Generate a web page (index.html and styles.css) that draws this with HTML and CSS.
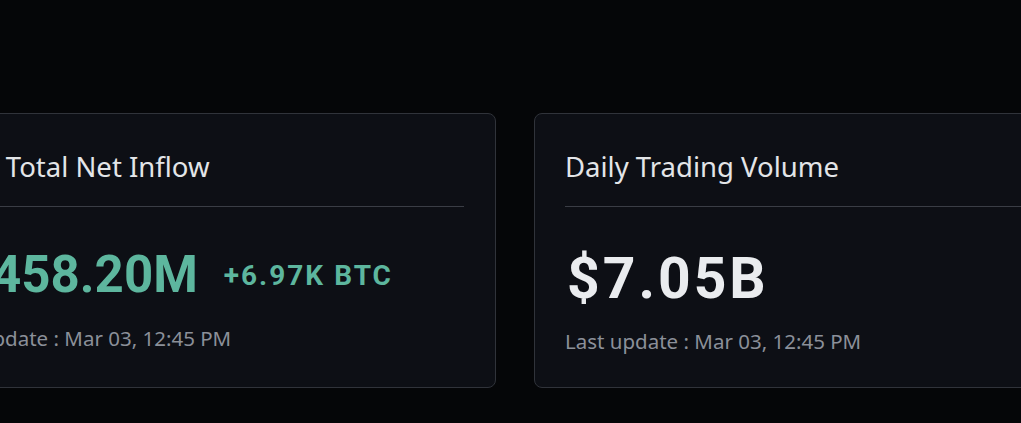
FILE: index.html
```html
<!DOCTYPE html>
<html lang="en">
<head>
<meta charset="utf-8">
<title>ETF Stats</title>
<link rel="stylesheet" href="styles.css">
</head>
<body>
<main class="stats">
  <section class="card">
    <h2 class="card-title">Daily Total Net Inflow</h2>
    <div class="card-divider"></div>
    <div class="value-row">
      <span class="value value-pos">+$458.20M</span>
      <span class="sub-value value-pos">+6.97K BTC</span>
    </div>
    <p class="updated">Last update : Mar 03, 12:45 PM</p>
  </section>
  <section class="card">
    <h2 class="card-title">Daily Trading Volume</h2>
    <div class="card-divider"></div>
    <div class="value-row value-row-lg">
      <span class="value value-lg">$7.05B</span>
    </div>
    <p class="updated">Last update : Mar 03, 12:45 PM</p>
  </section>
</main>
</body>
</html>
```

FILE: styles.css
```css
html, body {
  margin: 0;
  padding: 0;
  background: #050608;
  overflow: hidden;
}

body {
  width: 1021px;
  height: 423px;
  font-family: "Noto Sans", "Open Sans", sans-serif;
}

.stats {
  display: flex;
  gap: 38px;
  padding-top: 113px;
  margin-left: -96px;
}

.card {
  flex: 0 0 592px;
  box-sizing: border-box;
  height: 275px;
  background: #0d0f15;
  border: 1px solid #30333a;
  border-radius: 8px;
  padding: 35px 31px 0 30px;
  display: flex;
  flex-direction: column;
}

.card-title {
  margin: 0;
  font-size: 27.5px;
  line-height: 36px;
  font-weight: 400;
  color: #e3e5e8;
}

.card-divider {
  height: 1px;
  background: #3a3d45;
  margin-top: 21px;
}

.value-row {
  display: flex;
  align-items: center;
  gap: 26px;
  margin-top: 44px;
  height: 48px;
}

.value-row-lg {
  margin-top: 49px;
  height: 46px;
}

.value {
  font-family: Roboto, "Liberation Sans", sans-serif;
  font-weight: 700;
  font-size: 51px;
  line-height: 48px;
  color: #eaecef;
}

.value-lg {
  font-size: 57px;
  line-height: 46px;
  letter-spacing: 3px;
  margin-left: 2px;
}

.value-pos {
  color: #5db69e;
}

.sub-value {
  font-family: Roboto, "Liberation Sans", sans-serif;
  font-weight: 700;
  font-size: 28px;
  letter-spacing: 2px;
}

.updated {
  margin: 27px 0 0 0;
  font-size: 20.5px;
  line-height: 24px;
  color: #8b9099;
}
```
